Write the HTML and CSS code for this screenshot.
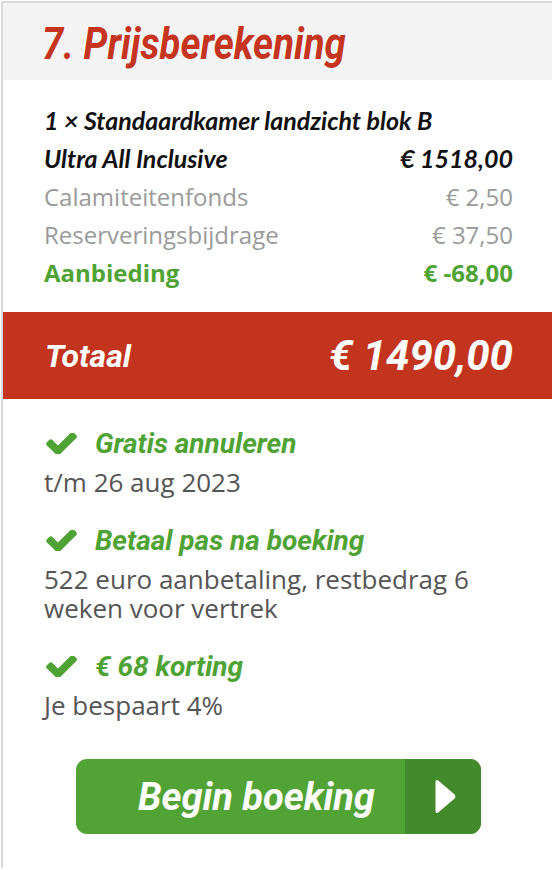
FILE: index.html
```html
<!DOCTYPE html>
<html lang="nl">
<head>
<meta charset="utf-8">
<title>Prijsberekening</title>
<link rel="stylesheet" href="styles.css">
</head>
<body>
<section class="card">
  <header class="card-head">
    <h2 class="title"><span class="din">7. Prijsberekening</span></h2>
  </header>
  <div class="lines">
    <div class="row row-main"><span>1 × Standaardkamer landzicht blok B</span></div>
    <div class="row row-main"><span>Ultra All Inclusive</span><span>€ 1518,00</span></div>
    <div class="row row-fee"><span>Calamiteitenfonds</span><span>€ 2,50</span></div>
    <div class="row row-fee"><span>Reserveringsbijdrage</span><span>€ 37,50</span></div>
    <div class="row row-deal"><span>Aanbieding</span><span>€ -68,00</span></div>
  </div>
  <div class="total">
    <span class="total-label din">Totaal</span>
    <span class="total-amount din">€ 1490,00</span>
  </div>
  <ul class="perks">
    <li class="perk">
      <div class="perk-title">
        <svg class="check" viewBox="113 400 1560 1025" aria-hidden="true"><path d="M1671 566q0 40-28 68l-724 724-136 136q-28 28-68 28t-68-28l-136-136-362-362q-28-28-28-68t28-68l136-136q28-28 68-28t68 28l294 295 656-657q28-28 68-28t68 28l136 136q28 28 28 68z"/></svg>
        <span class="din">Gratis annuleren</span>
      </div>
      <p class="perk-text">t/m 26 aug 2023</p>
    </li>
    <li class="perk">
      <div class="perk-title">
        <svg class="check" viewBox="113 400 1560 1025" aria-hidden="true"><path d="M1671 566q0 40-28 68l-724 724-136 136q-28 28-68 28t-68-28l-136-136-362-362q-28-28-28-68t28-68l136-136q28-28 68-28t68 28l294 295 656-657q28-28 68-28t68 28l136 136q28 28 28 68z"/></svg>
        <span class="din">Betaal pas na boeking</span>
      </div>
      <p class="perk-text">522 euro aanbetaling, restbedrag 6 weken voor vertrek</p>
    </li>
    <li class="perk">
      <div class="perk-title">
        <svg class="check" viewBox="113 400 1560 1025" aria-hidden="true"><path d="M1671 566q0 40-28 68l-724 724-136 136q-28 28-68 28t-68-28l-136-136-362-362q-28-28-28-68t28-68l136-136q28-28 68-28t68 28l294 295 656-657q28-28 68-28t68 28l136 136q28 28 28 68z"/></svg>
        <span class="din">€ 68 korting</span>
      </div>
      <p class="perk-text">Je bespaart 4%</p>
    </li>
  </ul>
  <div class="cta-wrap">
    <a class="cta" href="#">
      <span class="cta-label"><span class="din">Begin boeking</span></span>
      <span class="cta-arrow">
        <svg viewBox="0 0 21 35" aria-hidden="true"><path d="M3.2 1.6 L19.6 15.6 Q21 17.5 19.6 19.4 L3.2 33.4 Q0.5 35.4 0.5 31.8 V3.2 Q0.5 -0.4 3.2 1.6 Z"/></svg>
      </span>
    </a>
  </div>
</section>
</body>
</html>
```

FILE: styles.css
```css
html, body {
  margin: 0;
  padding: 0;
  background: #fff;
}

.card {
  margin: 1px 0 0 1px;
  border-left: 2px solid #d9d9d9;
  border-top: 2px solid #d9d9d9;
  min-height: 867px;
  box-sizing: border-box;
  font-family: "Open Sans", sans-serif;
}

.din {
  font-family: Roboto, "Liberation Sans", sans-serif;
  font-style: italic;
  font-weight: 700;
  display: inline-block;
}

.card-head {
  background: #f4f4f4;
  height: 77px;
  display: flex;
  align-items: center;
  padding-left: 39px;
}

.title {
  margin: 0;
  font-size: 45px;
  color: #c4341f;
}

.title .din {
  transform: scaleX(0.85);
  transform-origin: left center;
}

.lines {
  padding: 21px 39px 0 41px;
  display: flex;
  flex-direction: column;
}

.row {
  display: flex;
  justify-content: space-between;
  align-items: center;
  height: 38px;
}

.row-main {
  font-family: "Lato", sans-serif;
  font-style: italic;
  font-weight: 700;
  font-size: 25px;
  color: #111;
}

.row-fee {
  font-size: 24px;
  color: #9a9a9a;
}

.row-deal {
  font-size: 24px;
  font-weight: 700;
  color: #4fa334;
}

.total {
  margin-top: 21px;
  height: 87px;
  background: #c3341f;
  display: flex;
  justify-content: space-between;
  align-items: center;
  padding: 0 39px 0 42px;
  color: #fff;
}

.total-label {
  font-size: 32px;
}

.total-amount {
  font-size: 42px;
}

.perks {
  list-style: none;
  margin: 0;
  padding: 29px 0 0 41px;
  display: flex;
  flex-direction: column;
  gap: 28px;
}

.perk-title {
  display: flex;
  align-items: center;
  gap: 18px;
  height: 30px;
  font-size: 28px;
  color: #4fa334;
}

.check {
  width: 31px;
  height: 21px;
  margin-left: 2px;
  fill: #4fa334;
  flex: none;
}

.perk-text {
  margin: 10px 0 0;
  font-size: 26px;
  line-height: 29px;
  color: #555;
  padding-right: 60px;
}

.cta-wrap {
  display: flex;
  padding: 39px 0 0 73px;
}

.cta {
  display: flex;
  width: 405px;
  height: 75px;
  border-radius: 11px;
  overflow: hidden;
  text-decoration: none;
  background: #52a336;
}

.cta-label {
  flex: 1;
  display: flex;
  align-items: center;
  justify-content: center;
  padding-left: 32px;
  color: #fff;
  font-size: 38px;
}

.cta-arrow {
  width: 76px;
  background: #438a2c;
  display: flex;
  align-items: center;
  justify-content: center;
}

.cta-arrow svg {
  width: 21px;
  height: 35px;
  fill: #fff;
  margin-left: 4px;
}
```
